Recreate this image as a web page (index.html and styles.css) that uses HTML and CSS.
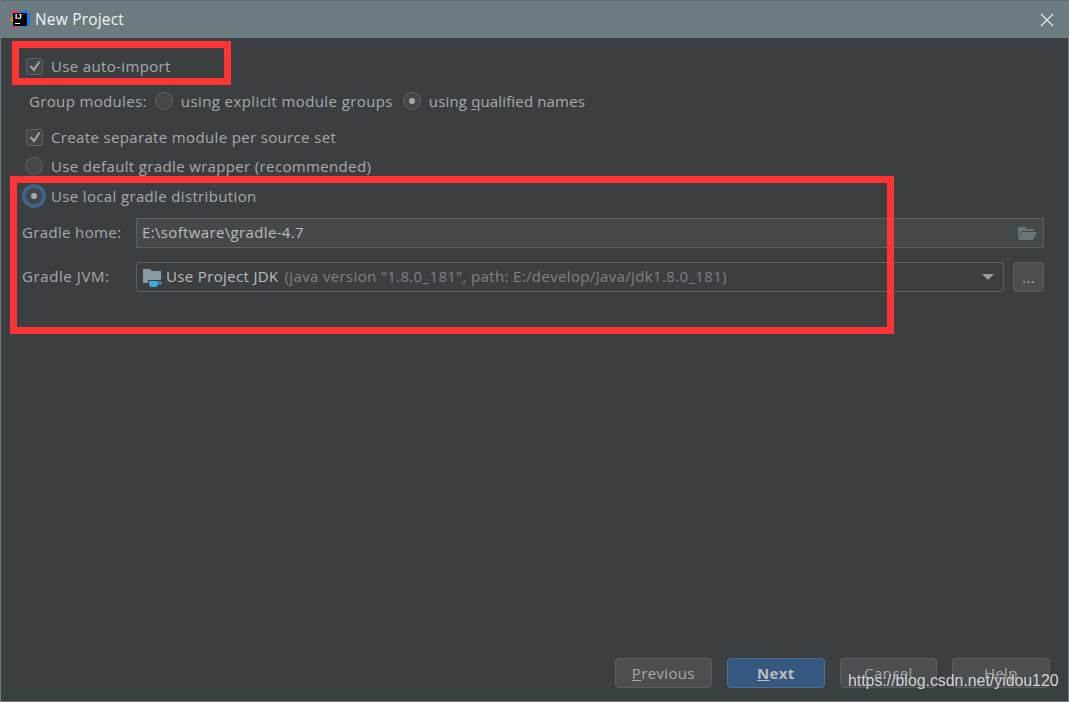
FILE: index.html
```html
<!DOCTYPE html>
<html lang="en">
<head>
<meta charset="utf-8">
<title>New Project</title>
<link rel="stylesheet" href="styles.css">
</head>
<body>
<div class="window">
  <header class="titlebar">
    <svg class="logo" width="20" height="19" viewBox="0 0 20 19">
      <path d="M3 0 L11 2 L9 9 L2 8Z" fill="#e8356f"/>
      <path d="M0 9 L3 6 L5 13 L1 11Z" fill="#f58220"/>
      <path d="M11 1 L16 0 L20 4 L20 15 L12 18 L8 9Z" fill="#0d7bf2"/>
      <path d="M3 11 L9 17 L3 18Z" fill="#e8356f"/>
      <rect x="3" y="3" width="14" height="13" fill="#000"/>
      <rect x="5" y="13" width="5" height="1" fill="#fff"/>
    </svg>
    <span class="logo-text">IJ</span>
    <span class="title">New Project</span>
    <svg class="close" width="14" height="14" viewBox="0 0 14 14"><path d="M1 1 L13 13 M13 1 L1 13" stroke="#e6e9ea" stroke-width="1.3" fill="none"/></svg>
  </header>
  <main class="content">
    <div class="row row-auto">
      <span class="check"><svg width="14" height="14" viewBox="0 0 14 14"><path d="M2.5 7 L6 11 L11.5 2.5" stroke="#9d9fa1" stroke-width="2.2" fill="none"/></svg></span>
      <span>Use auto-import</span>
    </div>
    <div class="row row-group">
      <span class="group-label">Group modules:</span>
      <span class="radio radio-first"></span>
      <span class="opt-a">using explicit module groups</span>
      <span class="radio radio-on"></span>
      <span class="opt-b">using <u class="mnemonic">q</u>ualified names</span>
    </div>
    <div class="row row-separate">
      <span class="check"><svg width="14" height="14" viewBox="0 0 14 14"><path d="M2.5 7 L6 11 L11.5 2.5" stroke="#9d9fa1" stroke-width="2.2" fill="none"/></svg></span>
      <span>Create separate module per source set</span>
    </div>
    <div class="row row-default">
      <span class="radio radio-lead"></span>
      <span>Use default gradle wrapper (recommended)</span>
    </div>
    <div class="row row-local">
      <span class="radio radio-lead radio-on radio-focus"></span>
      <span>Use local gradle distribution</span>
    </div>
    <div class="row row-home">
      <label class="field-label">Gradle home:</label>
      <div class="input">
        <span class="path">E:\software\gradle-4.7</span>
        <svg class="folder" width="19" height="15" viewBox="0 0 19 15"><path d="M0 1 H7 L9 3 H16 V5 H4 L0 12Z" fill="#6b7479"/><path d="M4 6 H19 L15 14 H0Z" fill="#6b7479"/></svg>
      </div>
    </div>
    <div class="row row-jvm">
      <label class="field-label field-jvm">Gradle JVM:</label>
      <div class="select">
        <svg class="jdk" width="20" height="20" viewBox="0 0 20 20"><path d="M0 1 H7 L9 3 H18 V12 H5 V15 H0Z" fill="#8a9aa3"/><path d="M6 13 H15 V16 Q15 19 12 19 H9 Q6 19 6 16Z" fill="#3fa9dc"/><path d="M15 14 H18 V16 H15" stroke="#3fa9dc" fill="none"/></svg>
        <span class="jdk-name">Use Project JDK</span>
        <span class="jdk-detail">(java version "1.8.0_181", path: E:/develop/Java/jdk1.8.0_181)</span>
        <span class="arrow"></span>
      </div>
      <button class="btn-more">...</button>
    </div>
  </main>
  <footer class="footer">
    <button class="btn"><u>P</u>revious</button>
    <button class="btn btn-primary"><u>N</u>ext</button>
    <button class="btn">Cancel</button>
    <button class="btn">Help</button>
  </footer>
  <div class="mark mark-top"></div>
  <div class="mark mark-bottom"></div>
  <div class="watermark">https://blog.csdn.net/yidou120</div>
</div>
</body>
</html>
```
FILE: styles.css
```css
* { box-sizing: border-box; }
html, body { margin: 0; padding: 0; }
body {
  width: 1069px;
  height: 702px;
  overflow: hidden;
  font-family: "Open Sans", "Noto Sans", sans-serif;
  font-size: 15px;
  letter-spacing: 0.35px;
  color: #a6a9ab;
}
.window {
  position: relative;
  width: 1069px;
  height: 702px;
  display: flex;
  flex-direction: column;
  background: #3c3f41;
  border: 1px solid #6d7b7f;
  border-top: 0;
}
.titlebar {
  position: relative;
  flex: none;
  height: 38px;
  display: flex;
  align-items: center;
  padding-left: 9px;
  background: #6c7b7f;
  border-top: 1px solid #5d6a6e;
}
.logo { flex: none; }
.logo-text {
  position: absolute;
  left: 14px;
  top: 11px;
  font: bold 8px "Liberation Sans", sans-serif;
  letter-spacing: 0;
  color: #fff;
}
.title {
  margin-left: 5px;
  color: #f0f3f4;
  font-size: 15.4px;
  letter-spacing: 0.25px;
}
.close { margin-left: auto; margin-right: 14px; }
.content {
  flex: 1;
  display: flex;
  flex-direction: column;
  padding-left: 21px;
}
.row { display: flex; align-items: center; }
.row-auto { height: 24px; margin-top: 16px; padding-left: 4px; }
.row-group { height: 24px; margin-top: 11px; padding-left: 7px; }
.row-separate { height: 24px; margin-top: 12px; padding-left: 4px; }
.row-default { height: 24px; margin-top: 5px; }
.row-local { height: 24px; margin-top: 6px; }
.row-home { height: 30px; margin-top: 10px; }
.row-jvm { height: 30px; margin-top: 14px; }
.check {
  flex: none;
  width: 17px;
  height: 17px;
  margin-right: 8px;
  display: flex;
  align-items: center;
  justify-content: center;
  background: #43474a;
  border: 1px solid #606466;
  border-radius: 3px;
}
.radio {
  flex: none;
  width: 18px;
  height: 18px;
  margin-left: 9px;
  margin-right: 8px;
  position: relative;
  border: 1px solid #606466;
  border-radius: 50%;
  background: #43474a;
}
.radio-first { margin-left: 8px; }
.radio-lead { margin-left: 3px; margin-right: 8px; }
.radio-on::after {
  content: "";
  position: absolute;
  left: 5px;
  top: 5px;
  width: 6px;
  height: 6px;
  border-radius: 50%;
  background: #a6a9ab;
}
.radio-focus { box-shadow: 0 0 0 3px #3f6489; border-color: #3f6489; }
.opt-a { margin-right: 1px; letter-spacing: 0.4px; }
.opt-b { letter-spacing: 0.15px; }
.mnemonic { text-underline-offset: 2px; }
.field-label { flex: none; width: 114px; padding-bottom: 2px; }
.field-jvm { letter-spacing: 0.6px; }
.input {
  flex: none;
  width: 908px;
  height: 30px;
  display: flex;
  align-items: center;
  justify-content: space-between;
  padding: 0 6px 0 5px;
  background: #45494a;
  border: 1px solid #5e6060;
}
.path { color: #bbbbbb; padding-bottom: 2px; }
.folder { flex: none; }
.select {
  flex: none;
  width: 868px;
  height: 30px;
  display: flex;
  align-items: center;
  padding-left: 6px;
  background: #3c3f41;
  border: 1px solid #5e6060;
  border-radius: 3px;
}
.jdk { flex: none; margin-right: 3px; margin-top: 2px; }
.jdk-name { color: #bbbbbb; padding-bottom: 2px; }
.jdk-detail { margin-left: 6px; color: #7f8284; padding-bottom: 2px; }
.arrow {
  margin-left: auto;
  margin-right: 9px;
  width: 0;
  height: 0;
  border-left: 6px solid transparent;
  border-right: 6px solid transparent;
  border-top: 6px solid #9a9c9e;
}
.btn-more {
  flex: none;
  width: 31px;
  height: 30px;
  margin-left: 9px;
  padding: 0;
  font: inherit;
  letter-spacing: inherit;
  color: #a6a9ab;
  background: #4b4f51;
  border: 1px solid #5c5f61;
  border-radius: 4px;
}
.footer {
  flex: none;
  display: flex;
  justify-content: flex-end;
  gap: 15px;
  padding: 0 18.4px 13px 0;
}
.btn {
  width: 97.5px;
  height: 30px;
  padding: 0;
  font: inherit;
  font-size: 15px;
  letter-spacing: inherit;
  color: #a6a9ab;
  background: #4b4f51;
  border: 1px solid #5c5f61;
  border-radius: 4px;
}
.btn-primary {
  background: #365880;
  border-color: #4c708c;
  color: #bbbbbb;
  font-weight: 700;
}
.mark {
  position: absolute;
  border: 7px solid #ff3535;
}
.mark-top { left: 11px; top: 41px; width: 219px; height: 44px; }
.mark-bottom { left: 9px; top: 176px; width: 884px; height: 158px; }
.watermark {
  position: absolute;
  left: 847px;
  top: 672px;
  font: 15.85px "Liberation Sans", sans-serif;
  letter-spacing: 0;
  color: #d3d5d6;
  text-shadow: 0 0 2px #3c3f41;
}
```
